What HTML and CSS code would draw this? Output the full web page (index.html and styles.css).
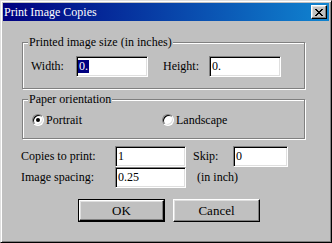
FILE: index.html
```html
<!DOCTYPE html>
<html>
<head>
<meta charset="utf-8">
<link rel="stylesheet" href="styles.css">
</head>
<body>
<div class="window">
  <div class="titlebar">
    <span class="title">Print Image Copies</span>
    <span class="close"><svg width="8" height="7" viewBox="0 0 8 7"><path d="M0 0h2v1h1v1h2v-1h1v-1h2v1h-1v1h-1v1h-1v1h1v1h1v1h1v1h-2v-1h-1v-1h-2v1h-1v1h-2v-1h1v-1h1v-1h1v-1h-1v-1h-1v-1h-1z" fill="#000"/></svg></span>
  </div>
  <div class="content">
    <fieldset class="group size">
      <legend>Printed image size (in inches)</legend>
      <div class="row">
        <span class="lbl lbl-width">Width:</span>
        <div class="field f-size"><span class="sel">0.</span></div>
        <span class="lbl lbl-height">Height:</span>
        <div class="field f-size">0.</div>
      </div>
    </fieldset>
    <fieldset class="group orient">
      <legend>Paper orientation</legend>
      <div class="row radios">
        <span class="radio-item portrait"><span class="radio checked"></span>Portrait</span>
        <span class="radio-item landscape"><span class="radio"></span>Landscape</span>
      </div>
    </fieldset>
    <div class="line copies">
      <span class="lbl lbl-left">Copies to print:</span>
      <div class="field f-mid">1</div>
      <span class="lbl lbl-skip">Skip:</span>
      <div class="field f-skip">0</div>
    </div>
    <div class="line spacing">
      <span class="lbl lbl-left">Image spacing:</span>
      <div class="field f-mid">0.25</div>
      <span class="lbl lbl-unit">(in inch)</span>
    </div>
    <div class="buttons">
      <div class="btn-default"><div class="btn">OK</div></div>
      <div class="btn btn-cancel">Cancel</div>
    </div>
  </div>
</div>
</body>
</html>
```

FILE: styles.css
```css
html, body {
  margin: 0;
  padding: 0;
  background: #c0c0c0;
}
body {
  font-family: "Liberation Serif", "Times New Roman", serif;
  font-size: 12px;
  color: #000;
}
.window {
  box-sizing: border-box;
  width: 332px;
  height: 243px;
  background: #c0c0c0;
  border: 1px solid;
  border-color: #dfdfdf #000 #000 #dfdfdf;
  box-shadow: inset 1px 1px 0 #fff, inset -1px -1px 0 #808080;
  padding: 2px;
}
.titlebar {
  height: 18px;
  display: flex;
  align-items: center;
  justify-content: space-between;
  background: linear-gradient(to right, #000080, #1084d0);
  padding: 0 2px 0 1px;
}
.title {
  color: #fff;
  line-height: 18px;
  font-size: 12px;
}
.close {
  box-sizing: border-box;
  width: 16px;
  height: 14px;
  background: #c0c0c0;
  border: 1px solid;
  border-color: #fff #000 #000 #fff;
  box-shadow: inset -1px -1px 0 #808080, inset 1px 1px 0 #dfdfdf;
  display: flex;
  align-items: center;
  justify-content: center;
}
.close svg { display: block; margin-left: -1px; }
.content {
  padding-left: 18px;
}
.group {
  box-sizing: border-box;
  width: 283px;
  margin: 0 0 0 1px;
  border: 1px solid #808080;
  box-shadow: 1px 1px 0 #fff, inset 1px 1px 0 #fff;
  padding: 7px 0 11px 0;
  min-width: 0;
}
.group legend {
  line-height: 14px;
  padding: 0 1px;
  margin-left: 5px;
  background: #c0c0c0;
}
.size { margin-top: 14px; }
.orient { margin-top: 3px; }
.row {
  display: flex;
  align-items: center;
  height: 21px;
}
.lbl { white-space: nowrap; }
.lbl-width { margin-left: 8px; width: 45px; }
.lbl-height { margin-left: 15px; width: 46px; }
.field {
  box-sizing: border-box;
  height: 21px;
  background: #fff;
  border: 1px solid;
  border-color: #808080 #fff #fff #808080;
  box-shadow: inset 1px 1px 0 #000, inset -1px -1px 0 #dfdfdf;
  padding: 2px 2px 0 2px;
  line-height: 15px;
}
.f-size { width: 72px; }
.f-mid { width: 71px; }
.f-skip { width: 55px; }
.sel {
  display: inline-block;
  background: #000080;
  color: #fff;
  line-height: 13px;
  padding: 0 1px;
  margin-left: -1px;
  margin-top: 1px;
  vertical-align: top;
}
.radios { height: 14px; }
.radio-item {
  display: flex;
  align-items: center;
}
.portrait { margin-left: 9px; width: 130px; }
.radio {
  box-sizing: border-box;
  position: relative;
  width: 12px;
  height: 12px;
  border-radius: 50%;
  background: #fff;
  border: 1px solid;
  border-color: #808080 #fff #fff #808080;
  box-shadow: inset 1px 1px 0 #000, inset -1px -1px 0 #dfdfdf;
  margin-right: 2px;
}
.checked::after {
  content: "";
  position: absolute;
  left: 3px;
  top: 3px;
  width: 4px;
  height: 4px;
  border-radius: 50%;
  background: #000;
}
.line {
  display: flex;
  align-items: center;
  height: 21px;
}
.copies { margin-top: 7px; }
.lbl-left { width: 94px; }
.lbl-skip { margin-left: 7px; width: 40px; }
.lbl-unit { margin-left: 11px; }
.buttons {
  display: flex;
  margin-top: 11px;
  margin-left: 57px;
  gap: 8px;
}
.btn-default {
  border: 1px solid #000;
}
.btn {
  box-sizing: border-box;
  width: 85px;
  height: 21px;
  background: #c0c0c0;
  border: 1px solid;
  border-color: #fff #000 #000 #fff;
  box-shadow: inset -1px -1px 0 #808080, inset 1px 1px 0 #dfdfdf;
  display: flex;
  align-items: center;
  justify-content: center;
  font-size: 13px;
}
.btn-cancel {
  width: 87px;
  height: 23px;
}
```
